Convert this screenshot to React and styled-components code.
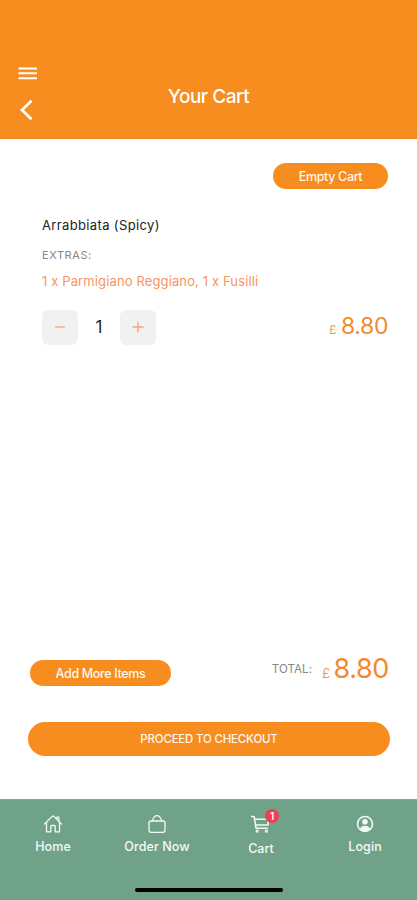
import styled, { createGlobalStyle } from 'styled-components';

const GlobalStyle = createGlobalStyle`
  * {
    box-sizing: border-box;
  }

  body {
    margin: 0;
    background-color: #ffffff;
    font-family: 'Inter', sans-serif;
  }

  button {
    padding: 0;
    border: none;
    font-family: inherit;
    cursor: pointer;
  }
`;

const Screen = styled.div`
  width: 100%;
  height: 900px;
  display: flex;
  flex-direction: column;
  overflow: hidden;
`;

const Header = styled.header`
  height: 139px;
  padding: 66px 18px 0;
  display: grid;
  grid-template-columns: 60px 1fr 60px;
  align-items: start;
  background-color: #f78c1f;
  border-bottom: 1px solid #ee8718;
  color: #ffffff;
`;

const HeaderActions = styled.div`
  display: flex;
  flex-direction: column;
  gap: 18px;
`;

const IconButton = styled.button`
  display: flex;
  width: 20px;
  background: none;
  color: inherit;
`;

const Title = styled.h1`
  margin: 18px 0 0;
  text-align: center;
  font-weight: 500;
  font-size: 19px;
  line-height: 25px;
  letter-spacing: -0.5px;
`;

const Content = styled.main`
  flex: 1;
  padding: 24px 27px 43px 28px;
  display: flex;
  flex-direction: column;
`;

const PillButton = styled.button`
  width: ${props => props.$width};
  height: ${props => props.$height || '26px'};
  border-radius: 17px;
  background-color: #f78c1f;
  color: #fff6ec;
  font-weight: 500;
  font-size: ${props => props.$size || '12.5px'};
  letter-spacing: ${props => props.$spacing || '-0.35px'};
`;

const TopActions = styled.div`
  display: flex;
  justify-content: flex-end;
  padding-right: 2px;
`;

const CartItem = styled.section`
  padding: 27px 2px 0 14px;
`;

const ItemName = styled.h2`
  margin: 0 0 14px;
  color: #222222;
  font-weight: 400;
  font-size: 13px;
  line-height: 18px;
  letter-spacing: 0.36px;
`;

const Caption = styled.div`
  color: #86868a;
  font-size: ${props => props.$size || '11px'};
  line-height: 14px;
  letter-spacing: ${props => props.$spacing || '0.6px'};
`;

const Extras = styled.p`
  margin: 10px 0 18px;
  color: #f79463;
  font-size: 13px;
  line-height: 18px;
  letter-spacing: 0.13px;
`;

const ItemRow = styled.div`
  display: flex;
  justify-content: space-between;
  align-items: center;
`;

const Stepper = styled.div`
  display: flex;
  align-items: center;
`;

const StepButton = styled.button`
  width: 36px;
  height: 35px;
  display: flex;
  align-items: center;
  justify-content: center;
  border-radius: 6px;
  background-color: #f1f1f2;
  color: #f4a27d;
`;

const Quantity = styled.span`
  width: 42px;
  text-align: center;
  color: #252525;
  font-size: 17px;
`;

const Price = styled.div`
  display: flex;
  align-items: baseline;
  gap: ${props => (props.$large ? '4px' : '5px')};
  padding-top: ${props => (props.$large ? '3px' : '2px')};
  color: #f18a2d;
  font-size: ${props => (props.$large ? '27px' : '23px')};
  line-height: 32px;
  letter-spacing: ${props => (props.$large ? '-0.4px' : '-0.4px')};
`;

const Currency = styled.span`
  color: #f49a59;
  font-size: ${props => (props.$large ? '13px' : '12px')};
`;

const Summary = styled.div`
  margin-top: auto;
  padding: 0 1px 0 2px;
  display: flex;
  justify-content: space-between;
`;

const AddMore = styled.div`
  padding-top: 8px;
`;

const Total = styled.div`
  display: flex;
  align-items: center;
  gap: 10px;
  height: 34px;
`;

const Checkout = styled.div`
  margin-top: 36px;
`;

const TabBar = styled.footer`
  height: 101px;
  display: flex;
  flex-direction: column;
  align-items: center;
  background-color: #70a28a;
  border-top: 1px solid #7ea997;
`;

const Tabs = styled.nav`
  width: 100%;
  height: 88px;
  padding: 14px 0 0 1px;
  display: grid;
  grid-template-columns: repeat(4, 1fr);
  align-items: start;
`;

const Tab = styled.a`
  display: flex;
  flex-direction: column;
  align-items: center;
  gap: ${props => (props.$active ? '6px' : '4px')};
  color: #f3faf5;
  font-weight: 500;
  font-size: 12.5px;
  line-height: 18px;
  letter-spacing: ${props => (props.$active ? '0' : '0.1px')};
`;

const TabIcon = styled.span`
  position: relative;
  display: flex;
`;

const Badge = styled.span`
  position: absolute;
  top: -5px;
  left: 14px;
  width: 14px;
  height: 14px;
  border-radius: 50%;
  background-color: #ef3e55;
  color: #ffffff;
  text-align: center;
  font-weight: 600;
  font-size: 10px;
  line-height: 14px;
  letter-spacing: 0;
`;

const HomeIndicator = styled.div`
  width: 148px;
  height: 4px;
  border-radius: 2px;
  background-color: #000000;
`;

const MenuIcon = () => (
  <svg width="20" height="14" viewBox="0 0 20 14" fill="none">
    <path d="M.5 2.5h18.5M.5 7.3h18.5M.5 12.2h18.5" stroke="currentColor" strokeWidth="2" />
  </svg>
);

const BackIcon = () => (
  <svg width="20" height="24" viewBox="0 0 20 24" fill="none">
    <path d="M13.5 2.8L4 12L13.5 21.2" stroke="currentColor" strokeWidth="2.8" />
  </svg>
);

const MinusIcon = () => (
  <svg width="12" height="12" viewBox="0 0 12 12">
    <path d="M1 6h10" stroke="currentColor" strokeWidth="1.3" />
  </svg>
);

const PlusIcon = () => (
  <svg width="12" height="12" viewBox="0 0 12 12">
    <path d="M.5 6h11M6 .5v11" stroke="currentColor" strokeWidth="1.3" />
  </svg>
);

const TabSvg = ({ children }) => (
  <svg
    width="20"
    height="20"
    viewBox="0 0 20 20"
    fill="none"
    stroke="currentColor"
    strokeWidth="1.3"
    strokeLinecap="round"
    strokeLinejoin="round"
  >
    {children}
  </svg>
);

const HomeIcon = () => (
  <TabSvg>
    <path d="M1.5 10L9.2 2.4q.8-.8 1.6 0L18.5 10M15.8 7.2V3.2h-1.9v2" />
    <path d="M3.5 8.5v9.3h4.3v-5.4q0-.9.9-.9h2.6q.9 0 .9.9v5.4h4.3V8.5" />
  </TabSvg>
);

const BagIcon = () => (
  <TabSvg>
    <rect x="2" y="7" width="16" height="11.3" rx="2" />
    <path d="M5.4 6.8Q6.8 1.7 10 1.7t4.6 5.1" />
  </TabSvg>
);

const CartIcon = () => (
  <TabSvg>
    <path d="M.4 2.5h2.7l2 11.8h11.4M3.7 5.2h13.4v5.9H4.8" strokeWidth="1.5" />
    <path d="M5.4 18v-1.6H7V18M14.6 18v-1.6h1.6V18" />
  </TabSvg>
);

const PersonIcon = () => (
  <TabSvg>
    <circle cx="10" cy="10" r="7.5" strokeWidth="1.6" />
    <circle cx="10" cy="7.7" r="2.8" fill="currentColor" stroke="none" />
    <path d="M4.8 15.2Q6 11.8 10 11.8t5.2 3.4Q13 17.4 10 17.4t-5.2-2.2z" fill="currentColor" stroke="none" />
  </TabSvg>
);

const tabs = [
  { label: 'Home', Icon: HomeIcon },
  { label: 'Order Now', Icon: BagIcon },
  { label: 'Cart', Icon: CartIcon, count: 1 },
  { label: 'Login', Icon: PersonIcon },
];

export default function App() {
  return (
    <>
      <GlobalStyle />
      <Screen>
        <Header>
          <HeaderActions>
            <IconButton aria-label="Menu"><MenuIcon /></IconButton>
            <IconButton aria-label="Back"><BackIcon /></IconButton>
          </HeaderActions>
          <Title>Your Cart</Title>
        </Header>
        <Content>
          <TopActions>
            <PillButton $width="115px">Empty Cart</PillButton>
          </TopActions>
          <CartItem>
            <ItemName>Arrabbiata (Spicy)</ItemName>
            <Caption>EXTRAS:</Caption>
            <Extras>1 x Parmigiano Reggiano, 1 x Fusilli</Extras>
            <ItemRow>
              <Stepper>
                <StepButton aria-label="Remove one"><MinusIcon /></StepButton>
                <Quantity>1</Quantity>
                <StepButton aria-label="Add one"><PlusIcon /></StepButton>
              </Stepper>
              <Price><Currency>£</Currency>8.80</Price>
            </ItemRow>
          </CartItem>
          <Summary>
            <AddMore>
              <PillButton $width="141px">Add More Items</PillButton>
            </AddMore>
            <Total>
              <Caption $size="11.5px" $spacing="0.1px">TOTAL:</Caption>
              <Price $large><Currency $large>£</Currency>8.80</Price>
            </Total>
          </Summary>
          <Checkout>
            <PillButton $width="100%" $height="34px" $size="11.5px" $spacing="-0.2px">
              PROCEED TO CHECKOUT
            </PillButton>
          </Checkout>
        </Content>
        <TabBar>
          <Tabs>
            {tabs.map(({ label, Icon, count }) => (
              <Tab key={label} $active={Boolean(count)}>
                <TabIcon>
                  <Icon />
                  {count && <Badge>{count}</Badge>}
                </TabIcon>
                {label}
              </Tab>
            ))}
          </Tabs>
          <HomeIndicator />
        </TabBar>
      </Screen>
    </>
  );
}
